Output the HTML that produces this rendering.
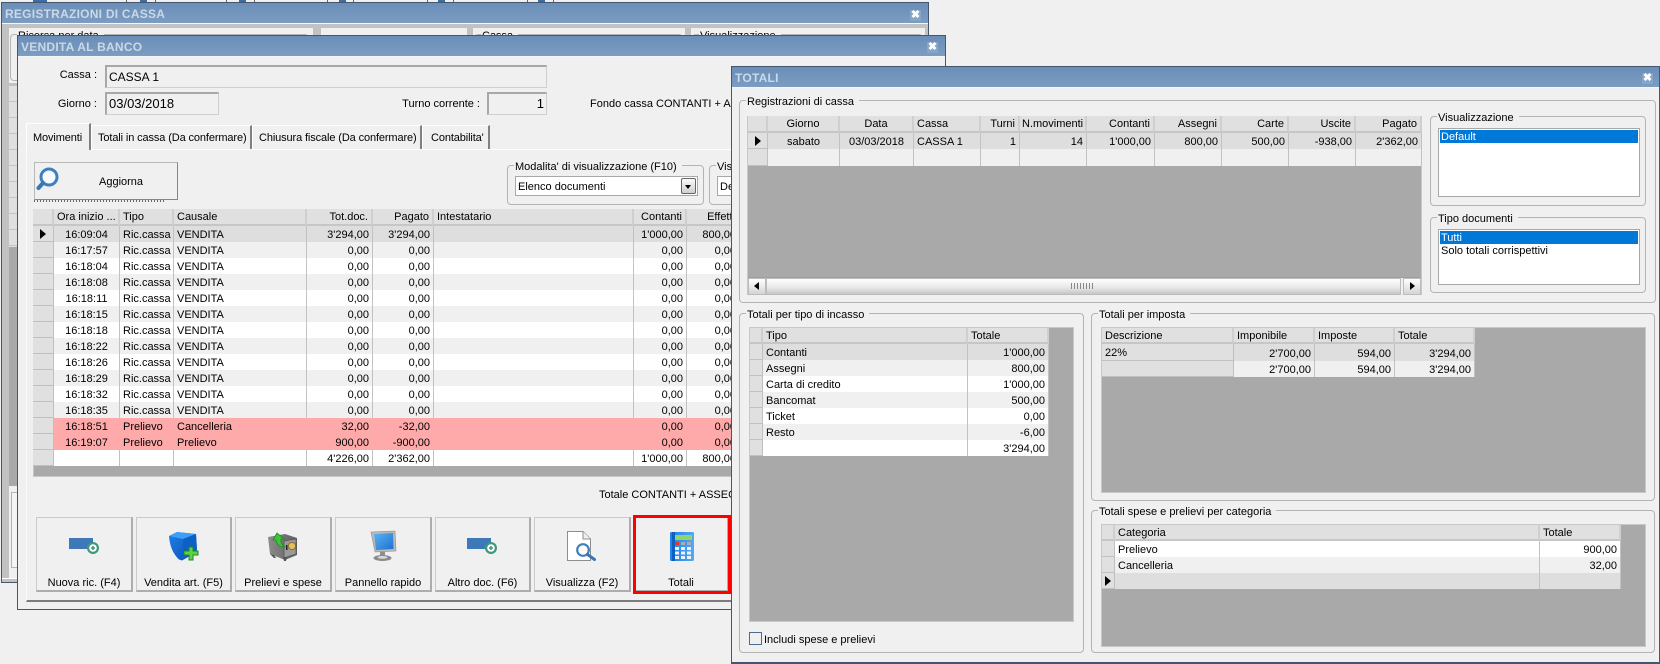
<!DOCTYPE html>
<html><head><meta charset="utf-8"><title>Totali</title>
<style>
html,body{margin:0;padding:0;width:1660px;height:664px;overflow:hidden;background:#f0f0f0}
body{position:relative;font:11px/14px "Liberation Sans",Arial,sans-serif;color:#000}
.a{position:absolute;box-sizing:border-box}
.t{position:absolute;white-space:nowrap;line-height:14px}
.r{text-align:right}
.w{position:absolute;box-sizing:border-box;background:#f0f0f0;border:1px solid #46566c;overflow:hidden}
.tb{position:absolute;left:0;right:0;top:0;height:20px;background:linear-gradient(#6a8eb8,#7c9dc2);border-bottom:1px solid #f4f7fa}
.tb b{position:absolute;left:3px;top:4px;font:bold 12px/14px "Liberation Sans",Arial,sans-serif;letter-spacing:.25px;color:#cbd8e7}
.x{position:absolute;width:11px;height:11px;background:#86a6c8;color:#fff;font:bold 11px/11px "Liberation Sans",Arial,sans-serif;text-align:center}
.g{position:absolute;box-sizing:border-box;border:1px solid #b4b4b4;border-radius:4px}
.g>span{position:absolute;top:-6px;background:#f0f0f0;padding:0 5px 0 1px;line-height:14px;white-space:nowrap;left:6px}
.f{position:absolute;box-sizing:border-box;background:#f0f0f0;border:1px solid #cfcfcf;border-top:2px solid #a8a8a8;border-left:2px solid #a8a8a8}
.f i{font:13px/18px "Liberation Sans",Arial,sans-serif;position:absolute;top:1px;left:2px;white-space:nowrap}
.tab{position:absolute;box-sizing:border-box;background:#f0f0f0;border-top:1px solid #fff;border-left:1px solid #fff;border-right:2px solid #808080;text-align:left;white-space:nowrap;letter-spacing:-.12px}
table{position:absolute;border-collapse:separate;border-spacing:0;table-layout:fixed}
td{box-sizing:border-box;height:16px;padding:2px 3px 0;white-space:nowrap;overflow:hidden;border-right:1px solid #c2c2c2;line-height:14px;font-size:11px}
tr.h td{height:17px;padding-top:2px;line-height:13px;background:#e0e0e0;border-bottom:2px solid #c6c6c6;border-right:2px solid #cfcfcf}
tr.h2 td{height:16px;padding-top:2px;line-height:12px;background:#e0e0e0;border-bottom:2px solid #c6c6c6;border-right:2px solid #cfcfcf}
td.i{background:#e0e0e0;border-bottom:1px solid #c0c0c0;border-right:1px solid #c0c0c0;padding:0;position:relative}
.p::before{content:"";position:absolute;left:50%;margin-left:-3px;top:3px;border-left:6px solid #000;border-top:5px solid transparent;border-bottom:5px solid transparent}
.c{text-align:center}.d{text-align:right}
tr.s td:not(.i){background:#dedede}
tr.e td:not(.i){background:#f0f0f0}
tr.n td:not(.i){background:#fff}
tr.q td:not(.i){background:#ffaaaa;border-right-color:#ffaaaa}
.gr{position:absolute;box-sizing:border-box;background:#a9a9a9;border:1px solid #c8c8c8}
.btn{position:absolute;box-sizing:border-box;background:#f0f0f0;border:1px solid #cbcbcb;border-right:2px solid #adadad;border-bottom:2px solid #adadad;text-align:center}
.btn span{position:absolute;left:0;right:0;bottom:0;line-height:14px;white-space:nowrap}
.l{position:absolute;box-sizing:border-box;background:#fff;border:1px solid #a8a8a8;padding:1px}
.l div{height:13px;line-height:15px;padding-left:1px;margin-bottom:0;overflow:visible;white-space:nowrap}
.l .sel{background:#0078d7;color:#fff}
</style></head><body>

<!-- top toolbar remnants -->
<div class="a" style="left:33px;top:0;width:14px;height:2px;background:#3a6ea8"></div>
<div class="a" style="left:126px;top:0;width:30px;height:2px;border-left:1px solid #666;border-right:1px solid #666"></div>
<div class="a" style="left:140px;top:0;width:7px;height:2px;background:#3a6ea8"></div>
<div class="a" style="left:226px;top:0;width:29px;height:2px;border-left:1px solid #666;border-right:1px solid #666"></div>
<div class="a" style="left:239px;top:0;width:7px;height:2px;background:#3a6ea8"></div>
<div class="a" style="left:327px;top:0;width:27px;height:2px;border-left:1px solid #666;border-right:1px solid #666"></div>
<div class="a" style="left:339px;top:0;width:7px;height:2px;background:#3a6ea8"></div>
<div class="a" style="left:427px;top:0;width:27px;height:2px;border-left:1px solid #666;border-right:1px solid #666"></div>
<div class="a" style="left:438px;top:0;width:7px;height:2px;background:#3a6ea8"></div>
<div class="a" style="left:527px;top:0;width:27px;height:2px;border-left:1px solid #666;border-right:1px solid #666"></div>
<div class="a" style="left:538px;top:0;width:7px;height:2px;background:#3a6ea8"></div>

<!-- REGISTRAZIONI DI CASSA -->
<div class="w" style="left:1px;top:2px;width:928px;height:581px;background:#c2c2c2">
  <div class="tb"><b>REGISTRAZIONI DI CASSA</b></div>
  <div class="x" style="left:908px;top:7px">✖</div>
  <div class="a" style="left:7px;top:25px;width:304px;height:55px;background:#f0f0f0"><div class="g" style="left:1px;top:6px;right:4px;height:47px"><span>Ricerca per data</span></div></div>
  <div class="a" style="left:319px;top:25px;width:146px;height:55px;background:#f0f0f0"><div class="a" style="left:0;right:0;top:7px;height:1px;background:#b4b4b4"></div></div>
  <div class="a" style="left:471px;top:25px;width:212px;height:55px;background:#f0f0f0"><div class="g" style="left:1px;top:6px;right:2px;height:47px"><span>Cassa</span></div></div>
  <div class="a" style="left:689px;top:25px;width:234px;height:55px;background:#f0f0f0"><div class="g" style="left:1px;top:6px;right:2px;height:47px"><span>Visualizzazione</span></div></div>
  <div class="a" style="left:7px;top:83px;width:12px;height:161px;background:repeating-linear-gradient(#e0e0e0 0,#e0e0e0 15px,#c4c4c4 15px,#c4c4c4 16px)"></div>
  <div class="a" style="left:7px;top:244px;width:12px;height:239px;background:#a9a9a9"></div>
  <div class="a" style="left:7px;top:483px;width:12px;height:92px;background:#f0f0f0"></div>
  <div class="a" style="left:9px;top:489px;width:10px;height:76px;border:1px solid #b4b4b4;background:#f4f4f4"></div>
  <div class="a" style="left:0;top:575px;width:20px;height:1px;background:#fff"></div>
</div>

<!-- VENDITA AL BANCO -->
<div class="w" style="left:17px;top:35px;width:929px;height:575px">
  <div class="tb"><b style="left:3px">VENDITA AL BANCO</b></div>
  <div class="x" style="left:909px;top:6px">✖</div>
</div>
<div class="a" style="left:26px;top:149px;width:705px;height:453px;border-left:1px solid #fafafa;border-top:1px solid #fff;border-bottom:2px solid #7c7c7c"></div>

<div class="t r" style="left:40px;width:57px;top:68px">Cassa :</div>
<div class="f" style="left:105px;top:65px;width:442px;height:23px"><i style="font-size:12px">CASSA 1</i></div>
<div class="t r" style="left:40px;width:57px;top:97px">Giorno :</div>
<div class="f" style="left:105px;top:92px;width:114px;height:23px"><i>03/03/2018</i></div>
<div class="t r" style="left:380px;width:100px;top:97px">Turno corrente :</div>
<div class="f" style="left:487px;top:92px;width:60px;height:23px"><i style="left:auto;right:2px">1</i></div>
<div class="t" style="left:590px;top:97px;width:141px;overflow:hidden">Fondo cassa CONTANTI + ASSEGNI</div>

<!-- tabs -->
<div class="a" style="left:26px;top:149px;width:705px;height:1px;background:#fff"></div>
<div class="tab" style="left:26px;top:123px;width:65px;height:27px;padding:7px 0 0 6px;z-index:2">Movimenti</div>
<div class="tab" style="left:91px;top:125px;width:161px;height:24px;padding:5px 0 0 6px">Totali in cassa (Da confermare)</div>
<div class="tab" style="left:252px;top:125px;width:170px;height:24px;padding:5px 0 0 6px">Chiusura fiscale (Da confermare)</div>
<div class="tab" style="left:422px;top:125px;width:68px;height:24px;padding:5px 0 0 8px">Contabilita'</div>

<!-- Aggiorna -->
<div class="btn" style="left:34px;top:162px;width:144px;height:38px;border:1px solid #b8b8b8;border-right-color:#858585;border-bottom-color:#858585"></div>
<div class="t" style="left:99px;top:175px">Aggiorna</div>
<svg class="a" style="left:36px;top:167px" width="24" height="24" viewBox="0 0 24 24"><circle cx="13" cy="10" r="8" fill="#f6fafd" stroke="#3f7fbc" stroke-width="3"/><path d="M7 16L2.5 21" stroke="#3877b4" stroke-width="4" stroke-linecap="round"/></svg>
<div class="a" style="left:34px;top:200px;width:130px;height:2px;background:repeating-linear-gradient(90deg,#666 0,#666 1px,transparent 1px,transparent 3px)"></div>

<!-- Modalita -->
<div class="g" style="left:507px;top:165px;width:197px;height:40px"><span>Modalita' di visualizzazione (F10)</span></div>
<div class="a" style="left:515px;top:176px;width:183px;height:20px;background:#fff;border:1px solid #a8a8a8"></div>
<div class="t" style="left:518px;top:180px">Elenco documenti</div>
<div class="a" style="left:681px;top:178px;width:15px;height:16px;border:1px solid #666;border-radius:2px;background:linear-gradient(#fafafa,#cfcfcf)"></div>
<div class="a" style="left:685px;top:185px;border-top:4px solid #000;border-left:3.5px solid transparent;border-right:3.5px solid transparent"></div>
<div class="g" style="left:709px;top:165px;width:100px;height:40px"><span>Visualizzazione</span></div>
<div class="a" style="left:717px;top:176px;width:60px;height:20px;background:#fff;border:1px solid #a8a8a8"></div>
<div class="t" style="left:720px;top:180px">Default</div>

<!-- main grid -->
<table style="left:33px;top:209px;width:707px">
<colgroup><col style="width:21px"><col style="width:66px"><col style="width:54px"><col style="width:133px"><col style="width:66px"><col style="width:61px"><col style="width:200px"><col style="width:53px"><col style="width:53px"></colgroup>
<tr class="h"><td></td><td>Ora inizio ...</td><td>Tipo</td><td>Causale</td><td class="d">Tot.doc.</td><td class="d">Pagato</td><td>Intestatario</td><td class="d">Contanti</td><td class="d">Effetti</td></tr>
<tr class="s"><td class="i p"></td><td class="c">16:09:04</td><td>Ric.cassa</td><td>VENDITA</td><td class="d">3'294,00</td><td class="d">3'294,00</td><td></td><td class="d">1'000,00</td><td class="d">800,00</td></tr>
<tr class="e"><td class="i"></td><td class="c">16:17:57</td><td>Ric.cassa</td><td>VENDITA</td><td class="d">0,00</td><td class="d">0,00</td><td></td><td class="d">0,00</td><td class="d">0,00</td></tr>
<tr class="n"><td class="i"></td><td class="c">16:18:04</td><td>Ric.cassa</td><td>VENDITA</td><td class="d">0,00</td><td class="d">0,00</td><td></td><td class="d">0,00</td><td class="d">0,00</td></tr>
<tr class="e"><td class="i"></td><td class="c">16:18:08</td><td>Ric.cassa</td><td>VENDITA</td><td class="d">0,00</td><td class="d">0,00</td><td></td><td class="d">0,00</td><td class="d">0,00</td></tr>
<tr class="n"><td class="i"></td><td class="c">16:18:11</td><td>Ric.cassa</td><td>VENDITA</td><td class="d">0,00</td><td class="d">0,00</td><td></td><td class="d">0,00</td><td class="d">0,00</td></tr>
<tr class="e"><td class="i"></td><td class="c">16:18:15</td><td>Ric.cassa</td><td>VENDITA</td><td class="d">0,00</td><td class="d">0,00</td><td></td><td class="d">0,00</td><td class="d">0,00</td></tr>
<tr class="n"><td class="i"></td><td class="c">16:18:18</td><td>Ric.cassa</td><td>VENDITA</td><td class="d">0,00</td><td class="d">0,00</td><td></td><td class="d">0,00</td><td class="d">0,00</td></tr>
<tr class="e"><td class="i"></td><td class="c">16:18:22</td><td>Ric.cassa</td><td>VENDITA</td><td class="d">0,00</td><td class="d">0,00</td><td></td><td class="d">0,00</td><td class="d">0,00</td></tr>
<tr class="n"><td class="i"></td><td class="c">16:18:26</td><td>Ric.cassa</td><td>VENDITA</td><td class="d">0,00</td><td class="d">0,00</td><td></td><td class="d">0,00</td><td class="d">0,00</td></tr>
<tr class="e"><td class="i"></td><td class="c">16:18:29</td><td>Ric.cassa</td><td>VENDITA</td><td class="d">0,00</td><td class="d">0,00</td><td></td><td class="d">0,00</td><td class="d">0,00</td></tr>
<tr class="n"><td class="i"></td><td class="c">16:18:32</td><td>Ric.cassa</td><td>VENDITA</td><td class="d">0,00</td><td class="d">0,00</td><td></td><td class="d">0,00</td><td class="d">0,00</td></tr>
<tr class="e"><td class="i"></td><td class="c">16:18:35</td><td>Ric.cassa</td><td>VENDITA</td><td class="d">0,00</td><td class="d">0,00</td><td></td><td class="d">0,00</td><td class="d">0,00</td></tr>
<tr class="q"><td class="i"></td><td class="c">16:18:51</td><td>Prelievo</td><td>Cancelleria</td><td class="d">32,00</td><td class="d">-32,00</td><td></td><td class="d">0,00</td><td class="d">0,00</td></tr>
<tr class="q"><td class="i"></td><td class="c">16:19:07</td><td>Prelievo</td><td>Prelievo</td><td class="d">900,00</td><td class="d">-900,00</td><td></td><td class="d">0,00</td><td class="d">0,00</td></tr>
<tr class="n"><td class="i"></td><td></td><td></td><td></td><td class="d">4'226,00</td><td class="d">2'362,00</td><td></td><td class="d">1'000,00</td><td class="d">800,00</td></tr>
</table>
<div class="a" style="left:33px;top:466px;width:698px;height:11px;background:#a9a9a9;border-left:1px solid #c4c4c4;border-bottom:1px solid #c8c8c8"></div>
<div class="t" style="left:599px;top:488px;width:132px;overflow:hidden">Totale CONTANTI + ASSEGNI</div>

<!-- bottom buttons -->
<div class="btn" style="left:36px;top:517px;width:97px;height:75px"><span>Nuova ric. (F4)</span></div>
<div class="btn" style="left:136px;top:517px;width:96px;height:75px"><span>Vendita art. (F5)</span></div>
<div class="btn" style="left:235px;top:517px;width:97px;height:75px"><span>Prelievi e spese</span></div>
<div class="btn" style="left:335px;top:517px;width:97px;height:75px"><span>Pannello rapido</span></div>
<div class="btn" style="left:435px;top:517px;width:96px;height:75px"><span>Altro doc. (F6)</span></div>
<div class="btn" style="left:534px;top:517px;width:97px;height:75px"><span>Visualizza (F2)</span></div>
<div class="btn" style="left:634px;top:517px;width:95px;height:75px"><span>Totali</span></div>
<div class="a" style="left:633px;top:515px;width:98px;height:79px;border:3.5px solid #f00"></div>

<!-- icons -->
<svg class="a" style="left:68px;top:536px" width="32" height="20" viewBox="0 0 32 20"><rect x="1" y="2" width="24" height="11" fill="#3f78b6"/><circle cx="25" cy="12" r="6" fill="#3c9a7a"/><circle cx="25" cy="12" r="3.8" fill="#fff"/><path d="M23 12h4M25 10v4" stroke="#3c9a7a" stroke-width="1.6"/></svg>
<svg class="a" style="left:466px;top:536px" width="32" height="20" viewBox="0 0 32 20"><rect x="1" y="2" width="24" height="11" fill="#3f78b6"/><circle cx="25" cy="12" r="6" fill="#3c9a7a"/><circle cx="25" cy="12" r="3.8" fill="#fff"/><path d="M23 12h4M25 10v4" stroke="#3c9a7a" stroke-width="1.6"/></svg>

<svg class="a" style="left:168px;top:531px" width="32" height="31" viewBox="0 0 32 31"><defs><linearGradient id="b1" x1="0" y1="0" x2="1" y2="1"><stop offset="0" stop-color="#1f7fe8"/><stop offset="1" stop-color="#0b4fb0"/></linearGradient></defs><path d="M1 5L9 1L28 3L29 21L14 29.5L11 28.5Q2 20 1 5Z" fill="url(#b1)"/><path d="M1 5L9 1L28 3L15 8Z" fill="#3ea0f5"/><path d="M15 8L28 3L29 18L14 29Z" fill="#0d60c6"/><path d="M19 15h5v-4h4v4h5v4h-5v5h-4v-5h-5Z" transform="translate(-3 5)" fill="#5fd04a" stroke="#1e8a1e"/></svg>

<svg class="a" style="left:267px;top:531px" width="32" height="31" viewBox="0 0 32 31"><defs><linearGradient id="s1" x1="0" y1="0" x2="1" y2="0"><stop offset="0" stop-color="#8c8c8c"/><stop offset="1" stop-color="#5e5e5e"/></linearGradient></defs><path d="M1 6L18 3L30 7V24L18 29L3 23Z" fill="url(#s1)"/><path d="M17 10L29 8V23L17 27Z" fill="#9a9a9a" stroke="#555" stroke-width=".8"/><path d="M3 23L7 27H9L7 24ZM16 26L17 30H19L20 26Z" fill="#555"/><circle cx="25" cy="15" r="3.6" fill="#e3c25a" stroke="#8a6e1e"/><rect x="19" y="14" width="1.5" height="5" fill="#222"/><path d="M6 9L10 2L17 8H14Q13 13 18 16Q10 16 9 9Z" fill="#3ec43a" stroke="#1c8a1c" stroke-width=".8"/></svg>

<svg class="a" style="left:370px;top:530px" width="27" height="32" viewBox="0 0 27 32"><defs><linearGradient id="m1" x1="0" y1="0" x2="1" y2="1"><stop offset="0" stop-color="#5ab4f2"/><stop offset="1" stop-color="#1e6fd0"/></linearGradient></defs><path d="M1 2L25 1L26 21L5 22Z" fill="#b9b9b9" stroke="#8a8a8a" stroke-width=".6"/><path d="M4 4L23 3L23.5 19L6 20Z" fill="url(#m1)"/><path d="M10 22H15V26H10Z" fill="#8d8d8d"/><ellipse cx="12.5" cy="28" rx="9" ry="3" fill="#8a8a8a"/><ellipse cx="12.5" cy="27.4" rx="5" ry="1.4" fill="#d8d8d8"/></svg>

<svg class="a" style="left:566px;top:530px" width="32" height="32" viewBox="0 0 32 32"><path d="M1.5 1.5H17L24.5 9V30.5H1.5Z" fill="#fff" stroke="#8e8e8e"/><path d="M17 1.5V9H24.5" fill="#eee" stroke="#8e8e8e"/><circle cx="17" cy="20" r="5.8" fill="#fff" stroke="#3f7fbc" stroke-width="2.2"/><path d="M21.5 24.5L28.5 29.5" stroke="#3877b4" stroke-width="3" stroke-linecap="round"/></svg>

<svg class="a" style="left:669px;top:531px" width="26" height="32" viewBox="0 0 26 32"><defs><linearGradient id="k1" x1="0" y1="0" x2="1" y2="0"><stop offset="0" stop-color="#1f80e6"/><stop offset="1" stop-color="#57a8f0"/></linearGradient></defs><rect x="1" y="1" width="24" height="29" rx="1.5" fill="url(#k1)"/><rect x="3" y="1" width="3" height="29" fill="#0f5fc0"/><rect x="6" y="4" width="17" height="5" fill="#8fd66a"/><rect x="6" y="11" width="4" height="3" fill="#d8401e"/><rect x="12" y="11" width="4" height="3" fill="#aab"/><rect x="18" y="11" width="4" height="3" fill="#aab"/><g fill="#e8f3fd"><rect x="6" y="16" width="4" height="3"/><rect x="12" y="16" width="4" height="3"/><rect x="18" y="16" width="4" height="3"/><rect x="6" y="20.5" width="4" height="3"/><rect x="12" y="20.5" width="4" height="3"/><rect x="18" y="20.5" width="4" height="3"/><rect x="6" y="25" width="4" height="3"/><rect x="12" y="25" width="4" height="3"/><rect x="18" y="25" width="4" height="3"/></g></svg>

<!-- TOTALI -->
<div class="w" style="left:731px;top:66px;width:929px;height:598px;border-bottom-width:2px">
  <div class="tb"><b style="left:3px">TOTALI</b></div>
  <div class="x" style="left:910px;top:6px">✖</div>
</div>

<div class="g" style="left:739px;top:100px;width:917px;height:203px"><span>Registrazioni di cassa</span></div>
<div class="gr" style="left:747px;top:116px;width:675px;height:179px"></div>
<table style="left:748px;top:116px;width:674px">
<colgroup><col style="width:20px"><col style="width:72px"><col style="width:74px"><col style="width:67px"><col style="width:39px"><col style="width:67px"><col style="width:68px"><col style="width:67px"><col style="width:67px"><col style="width:67px"><col style="width:66px"></colgroup>
<tr class="h"><td></td><td class="c">Giorno</td><td class="c">Data</td><td>Cassa</td><td class="d">Turni</td><td style="padding-left:2px;padding-right:2px">N.movimenti</td><td class="d">Contanti</td><td class="d">Assegni</td><td class="d">Carte</td><td class="d">Uscite</td><td class="d">Pagato</td></tr>
<tr class="s"><td class="i p"></td><td class="c">sabato</td><td class="c">03/03/2018</td><td>CASSA 1</td><td class="d">1</td><td class="d">14</td><td class="d">1'000,00</td><td class="d">800,00</td><td class="d">500,00</td><td class="d">-938,00</td><td class="d">2'362,00</td></tr>
<tr class="e"><td class="i" style="height:17px"></td><td></td><td></td><td></td><td></td><td></td><td></td><td></td><td></td><td></td><td></td></tr>
</table>
<!-- scrollbar -->
<div class="a" style="left:748px;top:277px;width:673px;height:18px;background:#f0f0f0;border-top:1px solid #a0a0a0"></div>
<div class="a" style="left:748px;top:278px;width:18px;height:17px;background:linear-gradient(#fff,#d4d4d4);border:1px solid #bcbcbc"></div>
<div class="a" style="left:754px;top:282px;border-right:5px solid #000;border-top:4px solid transparent;border-bottom:4px solid transparent"></div>
<div class="a" style="left:766px;top:278px;width:635px;height:17px;background:linear-gradient(#fff,#e6e6e6 60%,#c6c6c6);border:1px solid #bcbcbc"></div>
<div class="a" style="left:1071px;top:283px;width:23px;height:6px;background:repeating-linear-gradient(90deg,#888 0,#888 1px,transparent 1px,transparent 3px)"></div>
<div class="a" style="left:1403px;top:278px;width:18px;height:17px;background:linear-gradient(#fff,#d4d4d4);border:1px solid #bcbcbc"></div>
<div class="a" style="left:1410px;top:282px;border-left:5px solid #000;border-top:4px solid transparent;border-bottom:4px solid transparent"></div>

<div class="g" style="left:1430px;top:116px;width:216px;height:90px"><span>Visualizzazione</span></div>
<div class="l" style="left:1438px;top:128px;width:202px;height:69px"><div class="sel">Default</div></div>
<div class="g" style="left:1430px;top:217px;width:216px;height:76px"><span>Tipo documenti</span></div>
<div class="l" style="left:1438px;top:229px;width:202px;height:56px"><div class="sel">Tutti</div><div>Solo totali corrispettivi</div></div>

<div class="g" style="left:739px;top:313px;width:345px;height:340px"><span>Totali per tipo di incasso</span></div>
<div class="gr" style="left:749px;top:327px;width:325px;height:295px"></div>
<table style="left:750px;top:328px;width:299px">
<colgroup><col style="width:13px"><col style="width:205px"><col style="width:81px"></colgroup>
<tr class="h2"><td></td><td>Tipo</td><td>Totale</td></tr>
<tr class="s"><td class="i"></td><td>Contanti</td><td class="d">1'000,00</td></tr>
<tr class="e"><td class="i"></td><td>Assegni</td><td class="d">800,00</td></tr>
<tr class="n"><td class="i"></td><td>Carta di credito</td><td class="d">1'000,00</td></tr>
<tr class="e"><td class="i"></td><td>Bancomat</td><td class="d">500,00</td></tr>
<tr class="n"><td class="i"></td><td>Ticket</td><td class="d">0,00</td></tr>
<tr class="e"><td class="i"></td><td>Resto</td><td class="d">-6,00</td></tr>
<tr class="n"><td class="i"></td><td></td><td class="d">3'294,00</td></tr>
</table>
<div class="a" style="left:749px;top:632px;width:13px;height:13px;border:1px solid #4a6c94;background:#f0f0f0"></div>
<div class="t" style="left:764px;top:633px">Includi spese e prelievi</div>

<div class="g" style="left:1091px;top:313px;width:564px;height:188px"><span>Totali per imposta</span></div>
<div class="gr" style="left:1101px;top:327px;width:545px;height:166px"></div>
<table style="left:1102px;top:328px;width:373px">
<colgroup><col style="width:132px"><col style="width:81px"><col style="width:80px"><col style="width:80px"></colgroup>
<tr class="h2"><td>Descrizione</td><td>Imponibile</td><td>Imposte</td><td>Totale</td></tr>
<tr class="s"><td class="i" style="padding:2px 3px 0">22%</td><td class="d">2'700,00</td><td class="d">594,00</td><td class="d">3'294,00</td></tr>
<tr class="e"><td class="i"></td><td class="d">2'700,00</td><td class="d">594,00</td><td class="d">3'294,00</td></tr>
</table>

<div class="g" style="left:1091px;top:510px;width:564px;height:143px"><span>Totali spese e prelievi per categoria</span></div>
<div class="gr" style="left:1101px;top:524px;width:545px;height:123px"></div>
<table style="left:1102px;top:525px;width:519px">
<colgroup><col style="width:13px"><col style="width:425px"><col style="width:81px"></colgroup>
<tr class="h2"><td></td><td>Categoria</td><td>Totale</td></tr>
<tr class="n"><td class="i"></td><td>Prelievo</td><td class="d">900,00</td></tr>
<tr class="e"><td class="i"></td><td>Cancelleria</td><td class="d">32,00</td></tr>
<tr class="s"><td class="i p"></td><td></td><td></td></tr>
</table>

</body></html>
